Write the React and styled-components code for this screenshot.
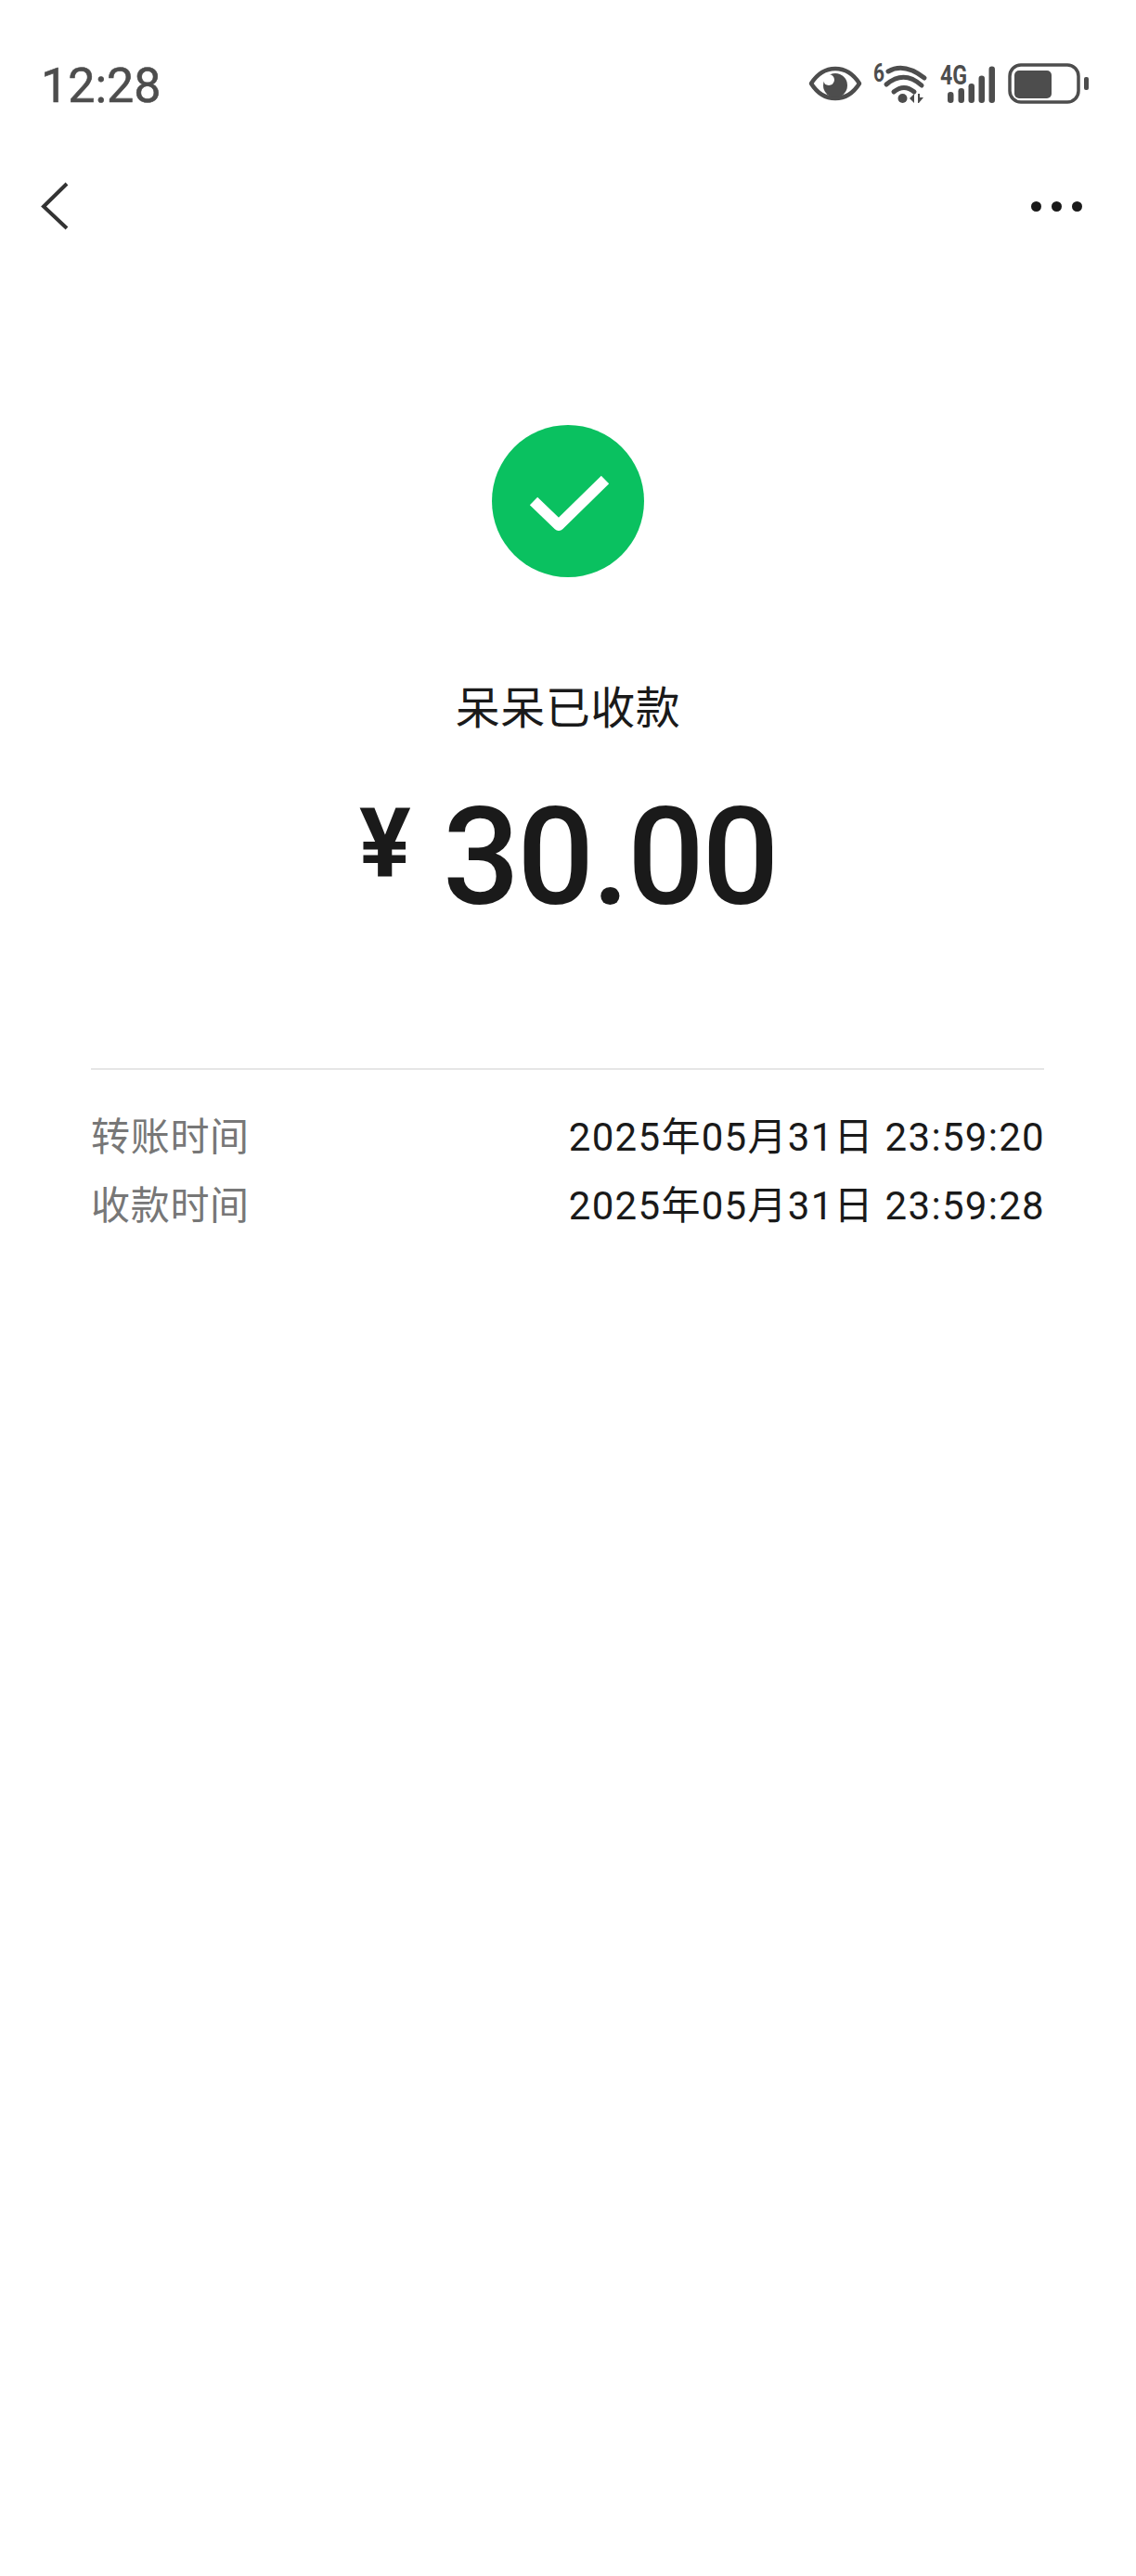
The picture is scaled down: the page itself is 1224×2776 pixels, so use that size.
import React from "react";
import styled, { createGlobalStyle } from "styled-components";

const Reset = createGlobalStyle`
  html, body { margin: 0; padding: 0; background: #fff; }
  body { font-family: Roboto, "Noto Sans CJK SC", sans-serif; }
`;

const Page = styled.div`
  width: 1224px;
  min-height: 2776px;
  background: #fff;
  display: flex;
  flex-direction: column;
`;

const StatusBar = styled.div`
  height: 180px;
  display: flex;
  align-items: center;
  justify-content: space-between;
  padding: 0 50px 0 44px;
  color: #4d4d4d;
`;

const Clock = styled.span`
  font-size: 52px;
  font-weight: 400;
  -webkit-text-stroke: 0.6px #4d4d4d;
  line-height: 60px;
  margin-top: 6px;
`;

const StatusIcons = styled.div`
  display: flex;
  align-items: center;
  gap: 12px;

  svg {
    overflow: visible;
  }
`;

const NavBar = styled.div`
  height: 84px;
  display: flex;
  align-items: center;
  justify-content: space-between;
  padding: 0 58px 0 44px;
`;

const Dots = styled.div`
  display: flex;
  gap: 11px;
`;

const Dot = styled.span`
  width: 11px;
  height: 11px;
  border-radius: 50%;
  background: #1a1a1a;
`;

const Result = styled.div`
  display: flex;
  flex-direction: column;
  align-items: center;
  padding-top: 194px;
`;

const Title = styled.div`
  margin-top: 112px;
  font-size: 48px;
  letter-spacing: 0.5px;
  line-height: 60px;
  color: #1a1a1a;
`;

const Amount = styled.div`
  margin-top: 51px;
  display: flex;
  align-items: center;
  gap: 34px;
  color: #1a1a1a;
  height: 160px;
`;

const Yen = styled.span`
  font-size: 104px;
  font-weight: 700;
  line-height: 1;
  margin-bottom: 32px;
`;

const Figure = styled.span`
  font-size: 146px;
  font-weight: 500;
  line-height: 160px;
  letter-spacing: -2.5px;
`;

const Details = styled.div`
  margin: 146px 99px 0 98px;
  padding-top: 31px;
  border-top: 2px solid #e6e6e6;
`;

const Row = styled.div`
  height: 74px;
  display: flex;
  align-items: center;
  justify-content: space-between;
  font-size: 42px;
`;

const Label = styled.span`
  color: #777;
  letter-spacing: 0.7px;
`;

const Value = styled.span`
  color: #1a1a1a;
  letter-spacing: 1.3px;
  margin-right: -1px;
`;

const EyeIcon = () => (
  <svg width="58" height="42" viewBox="-1 0 58 42">
    <path d="M3 21C10 10 18 5 29 5s19 5 26 16c-7 11-15 16-26 16S10 32 3 21Z" fill="none" stroke="#4d4d4d" strokeWidth="4.5" strokeLinejoin="round" />
    <circle cx="29" cy="23" r="13" fill="#4d4d4d" />
    <circle cx="22" cy="17" r="6" fill="#fff" />
  </svg>
);

const WifiIcon = () => (
  <svg width="60" height="44" viewBox="0 0 60 44">
    <text x="1" y="20" fontFamily="Roboto, sans-serif" fontWeight="700" fontSize="27" fill="#4d4d4d" textLength="12" lengthAdjust="spacingAndGlyphs">6</text>
    <g fill="none" stroke="#4d4d4d" strokeWidth="5" strokeLinecap="round">
      <path d="M17 9Q34 -1 56 16" />
      <path d="M15 23Q34 7 53 24" />
      <path d="M23 31Q34 22 45 31" />
    </g>
    <circle cx="32.5" cy="38" r="5" fill="#4d4d4d" />
    <path d="M40 38l5-5v10ZM49 43v-10h2v4h4l-5 6Z" fill="#4d4d4d" />
  </svg>
);

const SignalIcon = () => (
  <svg width="62" height="44" viewBox="0 0 62 44">
    <text x="1" y="23" fontFamily="Roboto, sans-serif" fontWeight="700" fontSize="29" fill="#4d4d4d" textLength="29" lengthAdjust="spacingAndGlyphs">4G</text>
    {[[9, 31], [20.5, 27], [31.5, 22], [42.5, 13.5], [53.5, 3.5]].map(([x, y]) => (
      <rect key={x} x={x} y={y} width="6.5" height={43 - y} rx="3.2" fill="#4d4d4d" />
    ))}
  </svg>
);

const BatteryIcon = () => (
  <svg width="88" height="44" viewBox="0 0 88 44">
    <rect x="2" y="2" width="74" height="40" rx="12" fill="none" stroke="#4d4d4d" strokeWidth="3.5" />
    <rect x="7" y="8" width="40" height="30" rx="5" fill="#4d4d4d" />
    <rect x="82" y="15" width="5" height="14" rx="2" fill="#4d4d4d" />
  </svg>
);

const BackIcon = () => (
  <svg width="32" height="54" viewBox="0 0 32 54">
    <path d="M28 3L3 27.5L28 51" fill="none" stroke="#333" strokeWidth="4" />
  </svg>
);

const SuccessMark = () => (
  <svg width="164" height="164" viewBox="0 0 164 164">
    <circle cx="82" cy="82" r="82" fill="#0ac160" />
    <path d="M45 82L72 108L122 59" fill="none" stroke="#fff" strokeWidth="12" strokeLinejoin="round" />
  </svg>
);

const rows = [
  ["转账时间", "2025年05月31日 23:59:20"],
  ["收款时间", "2025年05月31日 23:59:28"],
];

export default function App() {
  return (
    <Page>
      <Reset />
      <StatusBar>
        <Clock>12:28</Clock>
        <StatusIcons>
          <EyeIcon />
          <WifiIcon />
          <SignalIcon />
          <BatteryIcon />
        </StatusIcons>
      </StatusBar>
      <NavBar>
        <BackIcon />
        <Dots>
          <Dot />
          <Dot />
          <Dot />
        </Dots>
      </NavBar>
      <Result>
        <SuccessMark />
        <Title>呆呆已收款</Title>
        <Amount>
          <Yen>¥</Yen>
          <Figure>30.00</Figure>
        </Amount>
      </Result>
      <Details>
        {rows.map(([label, value]) => (
          <Row key={label}>
            <Label>{label}</Label>
            <Value>{value}</Value>
          </Row>
        ))}
      </Details>
    </Page>
  );
}
